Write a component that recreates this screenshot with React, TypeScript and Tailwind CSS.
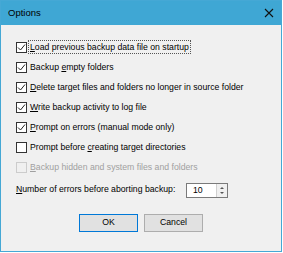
import React from "react";

type Opt = { pre: string; key: string; post: string; checked: boolean; disabled?: boolean; focused?: boolean };

const options: Opt[] = [
  { pre: "", key: "L", post: "oad previous backup data file on startup", checked: true, focused: true },
  { pre: "Backup ", key: "e", post: "mpty folders", checked: true },
  { pre: "", key: "D", post: "elete target files and folders no longer in source folder", checked: true },
  { pre: "", key: "W", post: "rite backup activity to log file", checked: true },
  { pre: "", key: "P", post: "rompt on errors (manual mode only)", checked: true },
  { pre: "Prompt before ", key: "c", post: "reating target directories", checked: false },
  { pre: "", key: "B", post: "ackup hidden and system files and folders", checked: false, disabled: true },
];

function Check({ checked, disabled }: { checked: boolean; disabled?: boolean }) {
  return (
    <span
      className={`flex h-[11px] w-[11px] shrink-0 items-center justify-center border ${
        disabled ? "border-[#cccccc] bg-[#f0f0f0]" : "border-[#333333] bg-white"
      }`}
    >
      {checked ? (
        <svg width="9" height="9" viewBox="0 0 9 9">
          <path d="M1 4.5 L3.5 7 L8 1.5" fill="none" stroke="#222" strokeWidth="1" />
        </svg>
      ) : null}
    </span>
  );
}

export default function App() {
  return (
    <div className="h-[253px] w-[283px] bg-white" style={{ fontFamily: '"Liberation Sans", Arial, sans-serif' }}>
      <div className="flex h-[252px] w-[282px] flex-col border border-[#45a8d5] bg-[#f0f0f0] text-[8.7px] text-black">
        <div className="flex h-[24px] shrink-0 items-center justify-between bg-[#3fa7d4] pl-[7px] pr-[7px]">
          <span className="text-[9.5px]">Options</span>
          <svg width="10" height="10" viewBox="0 0 10 10">
            <path d="M1 1 L9 9 M9 1 L1 9" stroke="#111" strokeWidth="1.1" />
          </svg>
        </div>
        <div className="flex flex-col pl-[15px] pt-[12px]">
          {options.map((o, i) => (
            <div key={i} className="flex h-[20px] items-center gap-[2px]">
              <Check checked={o.checked} disabled={o.disabled} />
              <span
                className={`px-[1px] leading-[12px] ${o.focused ? "outline outline-1 outline-dotted outline-[#555]" : ""} ${
                  o.disabled ? "text-[#a0a0a0]" : ""
                }`}
              >
                {o.pre}
                <span className="underline">{o.key}</span>
                {o.post}
              </span>
            </div>
          ))}
          <div className="mt-[3px] flex h-[20px] items-center">
            <span className="w-[170px]">
              <span className="underline">N</span>umber of errors before aborting backup:
            </span>
            <div className="flex h-[15px] w-[42px] border border-[#7a7a7a] bg-white">
              <span className="flex-1 pl-[6px] leading-[13px]">10</span>
              <div className="flex w-[11px] flex-col border-l border-[#d0d0d0] bg-[#f0f0f0]">
                <svg width="10" height="13" viewBox="0 0 10 13">
                  <path d="M3 5 L5 3 L7 5 Z" fill="#555" />
                  <path d="M3 8 L5 10 L7 8 Z" fill="#555" />
                </svg>
              </div>
            </div>
          </div>
          <div className="mt-[14px] flex gap-[6px] pl-[63px]">
            <button className="h-[18px] w-[59px] border border-[#0078d7] bg-[#e1e1e1] text-[8.7px]">OK</button>
            <button className="h-[18px] w-[59px] border border-[#adadad] bg-[#e1e1e1] text-[8.7px]">Cancel</button>
          </div>
        </div>
      </div>
    </div>
  );
}
